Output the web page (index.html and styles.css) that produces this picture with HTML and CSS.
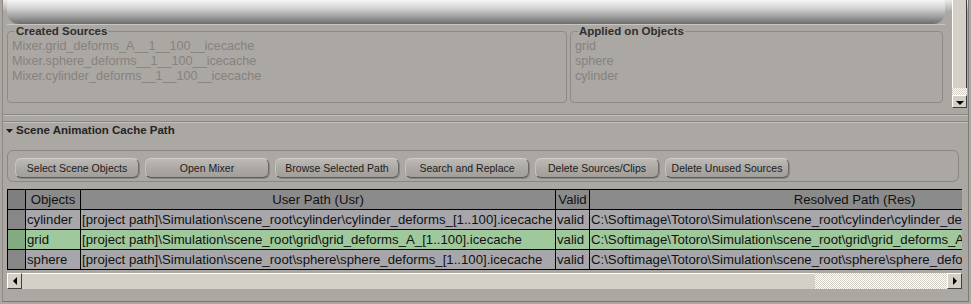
FILE: index.html
```html
<!DOCTYPE html>
<html lang="en">
<head>
  <meta charset="UTF-8" />
  <title>Animation Cache Manager</title>
  <link rel="stylesheet" href="styles.css">
</head>
<body>
<div class="panel">

  <div class="upper">
    <div class="upper-main">
      <div class="topbar-row"><div class="topbar"></div></div>
      <div class="groups">
        <fieldset class="group">
          <legend>Created Sources</legend>
          <div class="item">Mixer.grid_deforms_A__1__100__icecache</div>
          <div class="item">Mixer.sphere_deforms__1__100__icecache</div>
          <div class="item">Mixer.cylinder_deforms__1__100__icecache</div>
        </fieldset>
        <fieldset class="group">
          <legend>Applied on Objects</legend>
          <div class="item">grid</div>
          <div class="item">sphere</div>
          <div class="item">cylinder</div>
        </fieldset>
      </div>
    </div>
    <div class="vscroll">
      <div class="vtrack"></div>
      <div class="checker vgap"></div>
      <div class="arrow-btn"><span class="tri tri-down"></span></div>
    </div>
  </div>

  <div class="divider"></div>

  <div class="section-title">
    <svg width="7" height="4" viewBox="0 0 7 4"><polygon points="0,0 7,0 3.5,4" fill="#1e1e1e"/></svg>
    <span>Scene Animation Cache Path</span>
  </div>

  <div class="button-box">
    <button class="btn">Select Scene Objects</button>
    <button class="btn">Open Mixer</button>
    <button class="btn">Browse Selected Path</button>
    <button class="btn">Search and Replace</button>
    <button class="btn">Delete Sources/Clips</button>
    <button class="btn">Delete Unused Sources</button>
  </div>

  <div class="grid-wrap">
    <table class="grid">
      <colgroup>
        <col class="c-row"><col class="c-obj"><col class="c-usr"><col class="c-valid"><col class="c-res">
      </colgroup>
      <thead>
        <tr><th class="rh"></th><th>Objects</th><th>User Path (Usr)</th><th>Valid</th><th>Resolved Path (Res)</th></tr>
      </thead>
      <tbody>
        <tr>
          <td class="rh"></td><td>cylinder</td>
          <td>[project path]\Simulation\scene_root\cylinder\cylinder_deforms_[1..100].icecache</td>
          <td>valid</td>
          <td>C:\Softimage\Totoro\Simulation\scene_root\cylinder\cylinder_deforms_[1..100].icecache</td>
        </tr>
        <tr class="selected">
          <td class="rh"></td><td>grid</td>
          <td>[project path]\Simulation\scene_root\grid\grid_deforms_A_[1..100].icecache</td>
          <td>valid</td>
          <td>C:\Softimage\Totoro\Simulation\scene_root\grid\grid_deforms_A_[1..100].icecache</td>
        </tr>
        <tr>
          <td class="rh"></td><td>sphere</td>
          <td>[project path]\Simulation\scene_root\sphere\sphere_deforms_[1..100].icecache</td>
          <td>valid</td>
          <td>C:\Softimage\Totoro\Simulation\scene_root\sphere\sphere_deforms_[1..100].icecache</td>
        </tr>
      </tbody>
    </table>
  </div>

  <div class="hscroll">
    <div class="arrow-btn side"><span class="tri tri-left"></span></div>
    <div class="htrack"></div>
    <div class="checker hgap"></div>
    <div class="arrow-btn side"><span class="tri tri-right"></span></div>
  </div>

</div>
</body>
</html>
```

FILE: styles.css
```css
body { margin: 0; background: #aba7a3; font-family: "Liberation Sans", Arial, sans-serif; color: #222; }

.panel { margin: 0 2px; height: 301px; border-left: 1px solid #8c8884; border-right: 1px solid #7e7a76; border-bottom: 1px solid #7a7672; }

/* upper part: sources / objects */
.upper { display: flex; height: 108px; background: linear-gradient(#ebebeb 0, #aba7a3 12px); }
.upper-main { flex: 1; padding: 0 7px 0 4px; }
.topbar-row { height: 24px; overflow: hidden; border-bottom: 1px solid #c9c5c1; }
.topbar { height: 32px; margin-top: -8px; border-radius: 12px; background: linear-gradient(#ffffff 0, #f2f2f2 9px, #cfcfcf 17px, #a4a4a4 24px, #6c6c6c 32px); }

.groups { display: grid; grid-template-columns: 560px 1fr; gap: 3px; margin-right: 2px; }
.group { margin: 0; min-width: 0; padding: 1px 4px 18px; border: 1px solid #8e8a86; border-radius: 4px; }
.group legend { margin-left: 3px; padding: 0 1px; font-weight: bold; font-size: 11.5px; line-height: 13px; color: #2e2e2e; }
.item { font-size: 12.6px; line-height: 15px; color: #86827e; white-space: nowrap; }

.vscroll { width: 15px; margin-right: 1px; display: flex; flex-direction: column; }
.vtrack { height: 88px; background: #d4d0c8; border-left: 1px solid #fff; border-right: 1px solid #3c3c3c; box-sizing: border-box; }
.checker { background: repeating-conic-gradient(#ffffff 0 25%, #d4d0c8 0 50%) 0 0 / 2px 2px; }
.vgap { height: 7px; }
.arrow-btn { height: 13px; background: #d4d0c8; border: 1px solid; border-color: #fff #404040 #404040 #fff; box-sizing: border-box; display: flex; align-items: center; justify-content: center; }
.tri { width: 0; height: 0; border: 4px solid transparent; }
.tri-down { border-top-color: #000; border-bottom-width: 0; margin-top: 2px; }
.tri-left { border-right-color: #000; border-left-width: 0; }
.tri-right { border-left-color: #000; border-right-width: 0; }

/* lower part: cache path */
.divider { margin-top: 6px; height: 6px; border-top: 1px solid #8a8682; border-bottom: 1px solid #8a8682; box-shadow: inset 0 1px 0 #c2beba, 0 1px 0 #c2beba; }
.section-title { margin-top: 2px; padding-left: 3px; display: flex; align-items: center; gap: 3px; font-weight: bold; font-size: 11.5px; line-height: 13px; color: #242424; }

.button-box { margin: 13px 9px 0 4px; padding: 7px 7px 3px; border: 1px solid #8a8682; border-radius: 6px; display: flex; gap: 6px; }
.btn { width: 124px; height: 20px; padding: 0; font-family: "Liberation Sans", Arial, sans-serif; font-size: 10.5px; color: #1c1c1c; border: 1px solid; border-color: #d2cec9 #6d6a67 #5e5b58 #c6c2be; border-radius: 6px; background: linear-gradient(#bdb9b5, #aaa6a2 60%, #a29e9a); box-shadow: 1px 1px 0 #8a8682; }

.grid-wrap { margin: 7px 0 0 4px; width: 955px; overflow: hidden; }
.grid { border-collapse: collapse; table-layout: fixed; width: 1113px; font-size: 13.2px; color: #111; }
.c-row { width: 18px; }
.c-obj { width: 55px; }
.c-usr { width: 475px; }
.c-valid { width: 34px; }
.c-res { width: 530px; }
.grid th, .grid td { border: 1px solid #000; height: 19px; padding: 0 1px; line-height: 18px; white-space: nowrap; overflow: hidden; }
.grid th { background: #8b8b8b; font-weight: normal; text-align: center; }
.grid td { background: #a7a7ab; text-align: left; }
.grid .rh { background: #878787; }
.grid th.rh { background: #7f7f7f; }
.grid .selected td { background: #9fc89c; }
.grid .selected td.rh { background: #83ab81; }

.hscroll { margin: 3px 0 0 4px; width: 955px; height: 16px; display: flex; }
.hscroll .side { width: 15px; height: 16px; }
.htrack { width: 793px; background: #d4d0c8; border-top: 1px solid #fff; box-sizing: border-box; }
.hgap { flex: 1; }
```
